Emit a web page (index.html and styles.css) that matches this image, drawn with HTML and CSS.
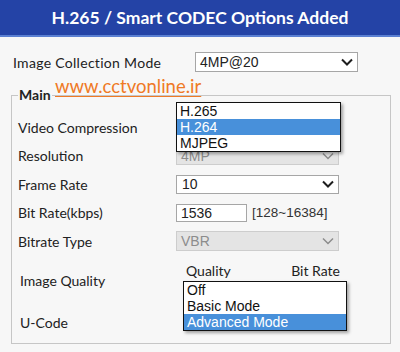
FILE: index.html
```html
<!DOCTYPE html>
<html lang="en">
<head>
    <meta charset="UTF-8">
    <meta name="viewport" content="width=device-width, initial-scale=1.0">
    <title>H.265 / Smart CODEC Options Added</title>
    <link rel="stylesheet" href="styles.css">
</head>
<body>
    <div class="banner">H.265 / Smart CODEC Options Added</div>

    <div class="top-row">
        <span class="label">Image Collection Mode</span>
        <div class="select">
            <span>4MP@20</span>
            <svg class="chev" viewBox="0 0 12 8"><path d="M1 1.5 L6 6.5 L11 1.5"/></svg>
        </div>
    </div>

    <a class="watermark" href="#">www.cctvonline.ir</a>

    <fieldset class="group">
        <legend>Main</legend>

        <div class="row first">
            <span class="label">Video Compression</span>
            <div class="ctrl">
                <div class="select">
                    <span>H.264</span>
                    <svg class="chev" viewBox="0 0 12 8"><path d="M1 1.5 L6 6.5 L11 1.5"/></svg>
                </div>
                <ul class="menu codec-menu">
                    <li>H.265</li>
                    <li class="on">H.264</li>
                    <li>MJPEG</li>
                </ul>
            </div>
        </div>

        <div class="row">
            <span class="label">Resolution</span>
            <div class="ctrl">
                <div class="select off res">
                    <span>4MP</span>
                    <svg class="chev" viewBox="0 0 12 8"><path d="M1 1.5 L6 6.5 L11 1.5"/></svg>
                </div>
            </div>
        </div>

        <div class="row">
            <span class="label">Frame Rate</span>
            <div class="ctrl">
                <div class="select fps">
                    <span>10</span>
                    <svg class="chev" viewBox="0 0 12 8"><path d="M1 1.5 L6 6.5 L11 1.5"/></svg>
                </div>
            </div>
        </div>

        <div class="row">
            <span class="label">Bit Rate(kbps)</span>
            <div class="ctrl inline">
                <div class="input">1536</div>
                <span class="range">[128~16384]</span>
            </div>
        </div>

        <div class="row">
            <span class="label">Bitrate Type</span>
            <div class="ctrl">
                <div class="select off">
                    <span>VBR</span>
                    <svg class="chev" viewBox="0 0 12 8"><path d="M1 1.5 L6 6.5 L11 1.5"/></svg>
                </div>
            </div>
        </div>

        <div class="row quality">
            <span class="label">Image Quality</span>
            <div class="ctrl">
                <div class="scale">
                    <span>Quality</span>
                    <span>Bit Rate</span>
                </div>
            </div>
        </div>

        <div class="row ucode">
            <span class="label">U-Code</span>
            <div class="ctrl">
                <div class="select small">
                    <span>Advanced Mode</span>
                </div>
                <ul class="menu ucode-menu">
                    <li>Off</li>
                    <li>Basic Mode</li>
                    <li class="on">Advanced Mode</li>
                </ul>
            </div>
        </div>
    </fieldset>
</body>
</html>
```

FILE: styles.css
```css
body {
    margin: 0;
    background: #f7f7f7;
    font-family: Lato, "Noto Sans", sans-serif;
    font-size: 14px;
    color: #222;
    position: relative;
}

.banner {
    height: 35px;
    line-height: 35px;
    background: #2443a6;
    border-bottom: 2px solid #5b80d2;
    color: #fff;
    font-weight: bold;
    font-size: 17.5px;
    text-align: center;
}

.top-row {
    display: grid;
    grid-template-columns: 182px 163px;
    align-items: center;
    height: 20px;
    margin-top: 15px;
    padding-left: 13px;
}
.top-row .label {
    letter-spacing: 0.3px;
}

.watermark {
    position: absolute;
    left: 55px;
    top: 76px;
    z-index: 3;
    color: #ef7a26;
    font-size: 18.5px;
    line-height: 20px;
    text-decoration: underline;
    text-decoration-thickness: 1px;
    text-underline-offset: 3px;
}

/* the Main box */
.group {
    margin: 16px 9px 0 11px;
    padding: 0 0 4px 6px;
    border: 1px solid #c6c6c6;
    min-width: 0;
}
.group legend {
    padding: 0 1px;
    font-weight: bold;
    line-height: 14px;
}

.row {
    display: grid;
    grid-template-columns: 158px 1fr;
    align-items: center;
    height: 28.5px;
}
.row.first {
    margin-top: 10.75px;
}
.row.quality {
    height: 49.5px;
    align-items: start;
}
.row.quality .label {
    align-self: center;
}
.row.ucode {
    height: 34.5px;
}
.row.quality .label,
.row.ucode .label {
    padding-left: 2px;
}

.ctrl {
    position: relative;
}
.ctrl.inline {
    display: flex;
    align-items: center;
}

.select {
    box-sizing: border-box;
    width: 163px;
    height: 20px;
    display: flex;
    align-items: center;
    justify-content: space-between;
    padding: 0 4px 0 4px;
    background: #fff;
    border: 1px solid #a6a6a6;
    font-family: "Liberation Sans", Arial, sans-serif;
    font-size: 14px;
    color: #222;
}
.select.res {
    height: 19px;
}
.select.fps {
    height: 19px;
    padding-left: 5px;
}
.select.off {
    background: #e4e4e4;
    border-color: #cdcdcd;
    color: #8c8c8c;
}
.select.small {
    width: 158px;
    height: 18px;
    margin-left: 7px;
}

.chev {
    width: 12px;
    height: 8px;
    fill: none;
    stroke: #1e1e1e;
    stroke-width: 2;
}
.select.off .chev {
    stroke: #8c8c8c;
    stroke-width: 1.5;
}

.input {
    box-sizing: border-box;
    width: 71px;
    height: 18px;
    line-height: 16px;
    padding-left: 4px;
    background: #fff;
    border: 1px solid #a6a6a6;
    font-family: "Liberation Sans", Arial, sans-serif;
    font-size: 14px;
}
.range {
    margin-left: 5px;
    font-family: "Liberation Sans", Arial, sans-serif;
    font-size: 13.5px;
    color: #333;
}

.scale {
    display: flex;
    justify-content: space-between;
    width: 154px;
    padding: 8.75px 0 0 10px;
    line-height: 14px;
}

/* open drop-down lists */
.menu {
    position: absolute;
    z-index: 2;
    margin: 0;
    padding: 0;
    list-style: none;
    box-sizing: border-box;
    background: #fff;
    border: 1px solid #111;
    box-shadow: 2px 2px 3px rgba(0, 0, 0, 0.35);
    font-family: "Liberation Sans", Arial, sans-serif;
    font-size: 14px;
    color: #111;
}
.menu li {
    height: 16px;
    line-height: 16px;
    padding-left: 3px;
}
.menu li.on {
    background: #4890da;
    color: #fff;
}
.codec-menu {
    top: -15px;
    left: 0;
    width: 165px;
    height: 50px;
}
.ucode-menu {
    top: -32px;
    left: 7px;
    width: 164px;
    height: 50px;
}
```
